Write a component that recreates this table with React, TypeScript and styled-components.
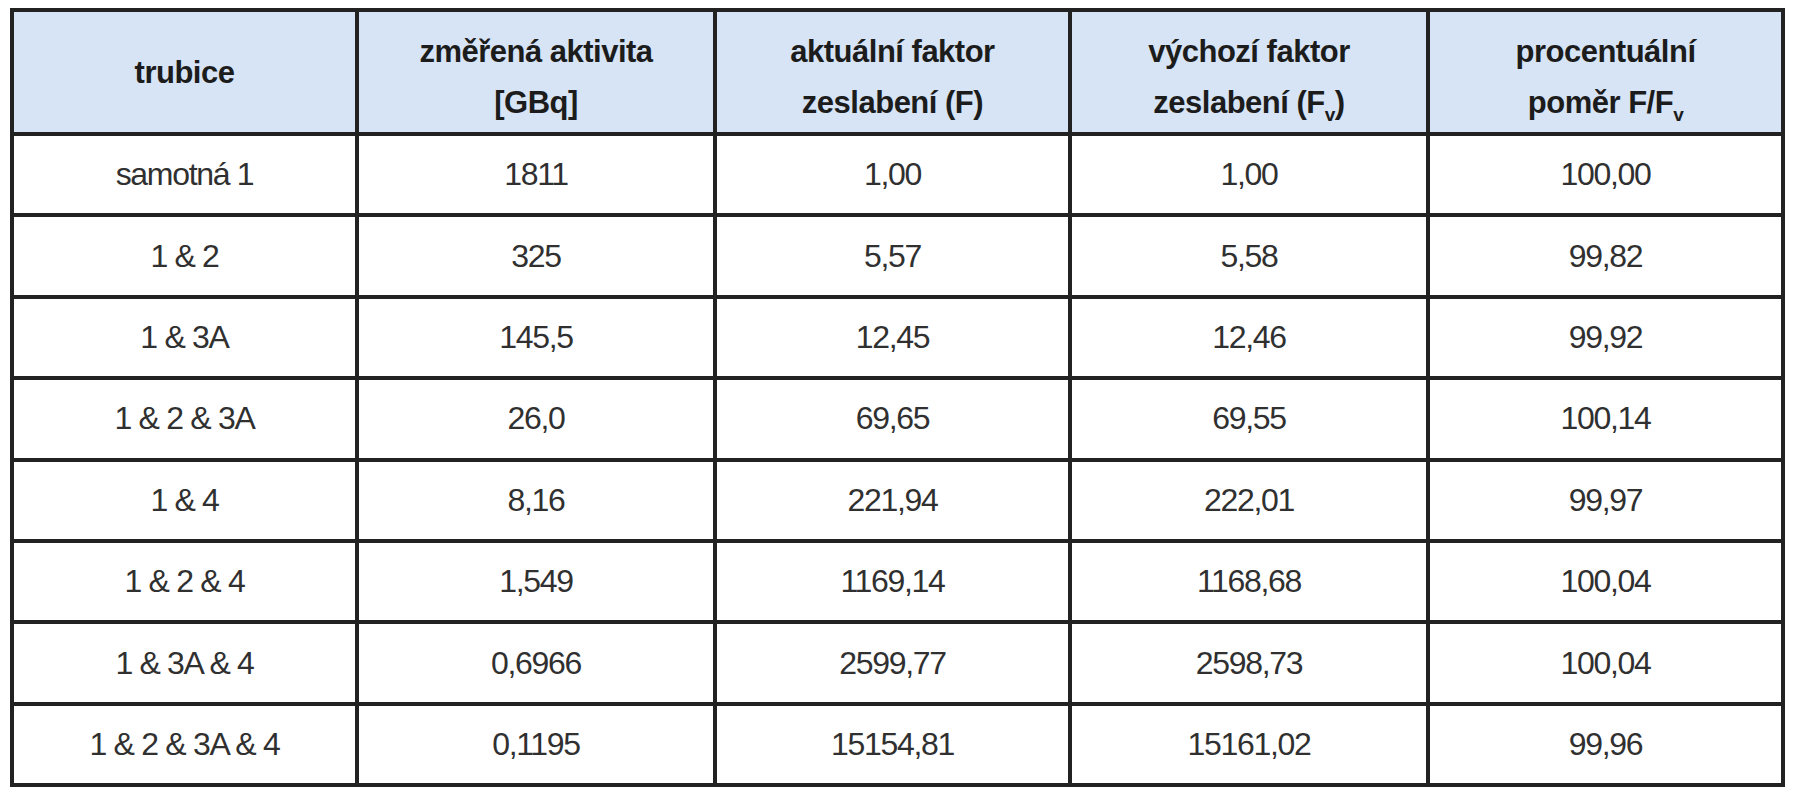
import { createGlobalStyle } from "styled-components";
import styled from "styled-components";

const GlobalStyle = createGlobalStyle`
  html, body {
    margin: 0;
    padding: 0;
    background: #fff;
  }
  body {
    font-family: "Liberation Sans", Arial, sans-serif;
  }
`;

interface IRow {
  tube: string;
  activity: string;
  factor: string;
  baseFactor: string;
  ratio: string;
}

const rows: IRow[] = [
  { tube: "samotná 1", activity: "1811", factor: "1,00", baseFactor: "1,00", ratio: "100,00" },
  { tube: "1 & 2", activity: "325", factor: "5,57", baseFactor: "5,58", ratio: "99,82" },
  { tube: "1 & 3A", activity: "145,5", factor: "12,45", baseFactor: "12,46", ratio: "99,92" },
  { tube: "1 & 2 & 3A", activity: "26,0", factor: "69,65", baseFactor: "69,55", ratio: "100,14" },
  { tube: "1 & 4", activity: "8,16", factor: "221,94", baseFactor: "222,01", ratio: "99,97" },
  { tube: "1 & 2 & 4", activity: "1,549", factor: "1169,14", baseFactor: "1168,68", ratio: "100,04" },
  { tube: "1 & 3A & 4", activity: "0,6966", factor: "2599,77", baseFactor: "2598,73", ratio: "100,04" },
  { tube: "1 & 2 & 3A & 4", activity: "0,1195", factor: "15154,81", baseFactor: "15161,02", ratio: "99,96" },
];

const colWidths = [345, 358, 355, 358, 355];

export default function App() {
  return (
    <>
      <GlobalStyle />
      <Page>
        <Table>
          <colgroup>
            {colWidths.map((w, i) => (
              <col key={i} style={{ width: w }} />
            ))}
          </colgroup>
          <thead>
            <HeadRow>
              <HeadCell>trubice</HeadCell>
              <HeadCell $twoLines>
                změřená aktivita
                <br />
                [GBq]
              </HeadCell>
              <HeadCell $twoLines>
                aktuální faktor
                <br />
                zeslabení (F)
              </HeadCell>
              <HeadCell $twoLines>
                výchozí faktor
                <br />
                zeslabení (F<Sub>v</Sub>)
              </HeadCell>
              <HeadCell $twoLines>
                procentuální
                <br />
                poměr F/F<Sub>v</Sub>
              </HeadCell>
            </HeadRow>
          </thead>
          <tbody>
            {rows.map((r) => (
              <BodyRow key={r.tube}>
                <Cell>{r.tube}</Cell>
                <Cell>{r.activity}</Cell>
                <Cell>{r.factor}</Cell>
                <Cell>{r.baseFactor}</Cell>
                <Cell>{r.ratio}</Cell>
              </BodyRow>
            ))}
          </tbody>
        </Table>
      </Page>
    </>
  );
}

const Page = styled.div`
  padding: 8px 0 0 10px;
`;

const Table = styled.table`
  width: 1775px;
  table-layout: fixed;
  border-collapse: collapse;
  border: 4px solid #222;
`;

const HeadRow = styled.tr`
  height: 124px;
  background: #d6e4f5;
`;

const HeadCell = styled.th<{ $twoLines?: boolean }>`
  border: 4px solid #222;
  padding: ${(p) => (p.$twoLines ? "9px 0 0" : "0")};
  text-align: center;
  vertical-align: middle;
  font-size: 31px;
  line-height: 51px;
  font-weight: bold;
  color: #1c1c1c;
  letter-spacing: -0.5px;
`;

const Sub = styled.sub`
  font-size: 19px;
  line-height: 0;
  vertical-align: -8px;
`;

const BodyRow = styled.tr`
  height: 81.4px;
`;

const Cell = styled.td`
  border: 4px solid #222;
  padding: 0;
  text-align: center;
  vertical-align: middle;
  font-size: 32px;
  color: #303030;
  letter-spacing: -1.3px;
`;
